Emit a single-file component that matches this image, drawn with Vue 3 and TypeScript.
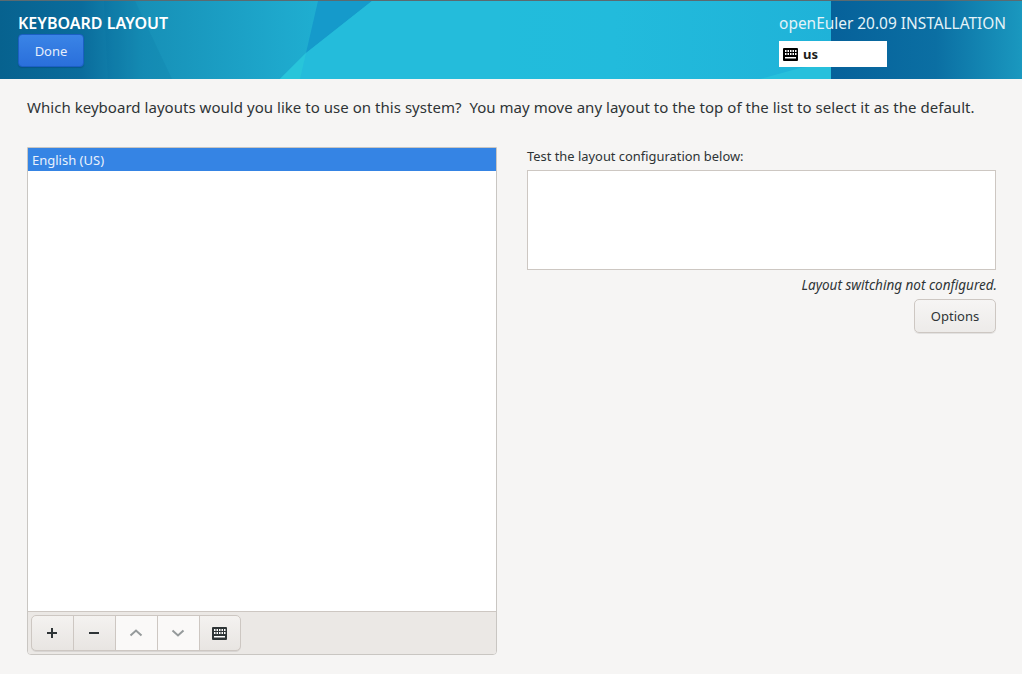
<script setup lang="ts">
const tools: { id: string; dim: boolean }[] = [
  { id: 'plus', dim: false },
  { id: 'minus', dim: false },
  { id: 'up', dim: true },
  { id: 'down', dim: true },
  { id: 'kbd', dim: false },
]
</script>

<template>
  <div class="page">
    <header class="top">
      <svg class="art" viewBox="0 0 1022 79" preserveAspectRatio="none" aria-hidden="true">
        <defs>
          <linearGradient id="base" x1="0" y1="0" x2="1" y2="0">
            <stop offset="0" stop-color="#07628f" />
            <stop offset="0.08" stop-color="#0a6c9c" />
            <stop offset="0.14" stop-color="#1790b7" />
            <stop offset="0.28" stop-color="#1ea9cd" />
            <stop offset="0.4" stop-color="#22bddb" />
            <stop offset="0.6" stop-color="#22bbdc" />
            <stop offset="0.82" stop-color="#1fb2d8" />
          </linearGradient>
          <linearGradient id="edge" x1="0" y1="0" x2="1" y2="0">
            <stop offset="0" stop-color="#06619a" />
            <stop offset="0.55" stop-color="#0b6fa3" />
            <stop offset="1" stop-color="#1a98bf" />
          </linearGradient>
        </defs>
        <rect width="1022" height="79" fill="url(#base)" />
        <polygon points="135,1 172,79 108,79 104,1" fill="#0a6c9c" opacity="0.14" />
        <polygon points="318,1 372,1 306,53" fill="#159acb" />
        <polygon points="372,1 500,1 500,79 280,79 306,53" fill="#24bcdb" />
        <polygon points="306,53 280,79 300,79" fill="#28c5da" />
        <polygon points="760,79 800,68 831,64 831,79" fill="#27c0dc" />
        <rect x="831" y="1" width="191" height="78" fill="url(#edge)" />
        <rect width="1022" height="1" fill="#5b6a70" />
      </svg>
      <div class="top-left">
        <h1 class="title">KEYBOARD LAYOUT</h1>
        <button class="done" type="button">Done</button>
      </div>
      <div class="top-right">
        <div class="product">openEuler 20.09 INSTALLATION</div>
        <div class="layout-box">
          <svg class="kbd-small" viewBox="0 0 15 13" aria-hidden="true">
            <rect width="15" height="13" rx="1" fill="#000" />
            <template v-for="y in [2, 5]" :key="y">
              <rect v-for="x in [2, 4.5, 7, 9.5, 12]" :key="x" :x="x" :y="y" width="1.5" height="2" fill="#fff" />
            </template>
            <rect x="2" y="9" width="11" height="1.5" fill="#fff" />
          </svg>
          <span class="us">us</span>
        </div>
      </div>
    </header>

    <main class="content">
      <p class="prompt">Which keyboard layouts would you like to use on this system?&nbsp; You may move any layout to the top of the list to select it as the default.</p>
      <div class="columns">
        <section class="list-panel">
          <div class="list">
            <div class="row">English (US)</div>
          </div>
          <div class="toolbar">
            <div class="tool-group">
              <button v-for="t in tools" :key="t.id" class="tool" :class="{ dim: t.dim }" type="button">
                <svg v-if="t.id === 'plus'" width="12" height="12" viewBox="0 0 12 12"><path d="M6 1v10M1 6h10" stroke="#2e3436" stroke-width="2" fill="none" /></svg>
                <svg v-else-if="t.id === 'minus'" width="12" height="12" viewBox="0 0 12 12"><path d="M1 6h10" stroke="#2e3436" stroke-width="2" fill="none" /></svg>
                <svg v-else-if="t.id === 'up'" width="14" height="10" viewBox="0 0 14 10"><path d="M1.5 7.5 7 2.5l5.5 5" stroke="#959a9b" stroke-width="2" fill="none" /></svg>
                <svg v-else-if="t.id === 'down'" width="14" height="10" viewBox="0 0 14 10"><path d="M1.5 2.5 7 7.5l5.5-5" stroke="#959a9b" stroke-width="2" fill="none" /></svg>
                <svg v-else width="15" height="13" viewBox="0 0 15 13">
                  <rect width="15" height="13" rx="1" fill="#2e3436" />
                  <template v-for="y in [2, 5]" :key="y">
                    <rect v-for="x in [2, 4.5, 7, 9.5, 12]" :key="x" :x="x" :y="y" width="1.5" height="2" fill="#fff" />
                  </template>
                  <rect x="2" y="9" width="11" height="1.5" fill="#fff" />
                </svg>
              </button>
            </div>
          </div>
        </section>

        <section class="test-panel">
          <label class="test-label">Test the layout configuration below:</label>
          <div class="test-area"></div>
          <div class="status">Layout switching not configured.</div>
          <button class="options" type="button">Options</button>
        </section>
      </div>
    </main>
  </div>
</template>

<style>
html, body { margin: 0; background: #f6f5f4; }
</style>

<style scoped>
.page {
  width: 1022px;
  height: 674px;
  background: #f6f5f4;
  font-family: "Noto Sans", sans-serif;
  color: #2e3436;
  font-size: 14px;
  overflow: hidden;
  display: flex;
  flex-direction: column;
}
.top {
  position: relative;
  height: 79px;
  flex: none;
  display: flex;
  justify-content: space-between;
  box-sizing: border-box;
}
.art { position: absolute; inset: 0; width: 100%; height: 100%; display: block; }
.top-left, .top-right { position: relative; display: flex; flex-direction: column; }
.top-left { padding: 13px 0 0 18px; align-items: flex-start; }
.top-right { padding: 13px 16px 0 0; align-items: flex-start; }
.title {
  margin: 0;
  font-size: 16px;
  line-height: 21px;
  font-weight: 600;
  color: #fff;
}
.done {
  width: 66px;
  height: 33px;
  padding: 0;
  border: 1px solid #1b5fc4;
  border-radius: 4px;
  background: linear-gradient(#3a84e6, #2a6fdb);
  box-shadow: 0 1px 1px rgba(0, 40, 90, 0.25);
  color: #e6eefb;
  font: 13px "Noto Sans", sans-serif;
}
.product { color: #e4f3f8; font-size: 15.43px; line-height: 21px; }
.layout-box {
  margin-top: 7px;
  width: 108px;
  height: 26px;
  background: #fff;
  display: flex;
  align-items: center;
  gap: 5px;
  padding-left: 4px;
  box-sizing: border-box;
}
.kbd-small { width: 15px; height: 13px; display: block; }
.us { font-size: 13px; font-weight: 700; color: #1c1c1c; }
.content { padding: 0 25px 0 27px; flex: 1; min-height: 0; display: flex; flex-direction: column; }
.prompt { margin: 18px 0 0; font-size: 15px; line-height: 20px; white-space: nowrap; letter-spacing: 0.035px; }
.columns { margin-top: 30px; display: flex; gap: 30px; align-items: flex-start; }
.list-panel {
  width: 470px;
  height: 508px;
  box-sizing: border-box;
  border: 1px solid #c9c6c2;
  border-radius: 0 0 4px 4px;
  display: flex;
  flex-direction: column;
  background: #fff;
}
.list { flex: 1; }
.row {
  height: 22px;
  padding: 1px 0 0 4px;
  line-height: 22px;
  font-size: 13px;
  background: #3584e4;
  color: #e9f1fc;
}
.toolbar {
  height: 43px;
  flex: none;
  box-sizing: border-box;
  border-top: 1px solid #cdc7c2;
  background: #ebe8e5;
  border-radius: 0 0 3px 3px;
  padding: 3px 0 0 3px;
}
.tool-group { display: flex; height: 36px; filter: drop-shadow(0 1px 0 rgba(0, 0, 0, 0.08)); }
.tool {
  width: 43px;
  flex: none;
  margin: 0 0 0 -1px;
  padding: 0 1px 0 0;
  border: 1px solid #cdc7c2;
  background: linear-gradient(#f4f2f0, #e8e5e2);
  display: flex;
  align-items: center;
  justify-content: center;
}
.tool:first-child { margin-left: 0; border-radius: 5px 0 0 5px; }
.tool:last-child { width: 42px; padding: 0 2px 0 0; border-radius: 0 5px 5px 0; }
.tool.dim { background: #faf9f8; }
.test-panel { width: 469px; display: flex; flex-direction: column; align-items: flex-end; }
.test-label { align-self: flex-start; font-size: 12.9px; line-height: 16px; margin-top: 1px; }
.test-area {
  align-self: stretch;
  height: 100px;
  box-sizing: border-box;
  margin-top: 6px;
  background: #fff;
  border: 1px solid #cdc7c2;
}
.status { font-size: 13.5px; line-height: 16px; font-style: italic; margin: 7px -1px 0 0; }
.options {
  margin-top: 6px;
  width: 82px;
  height: 34px;
  padding: 0;
  border: 1px solid #cdc7c2;
  border-radius: 5px;
  background: linear-gradient(#f6f5f4, #edebe9);
  box-shadow: 0 1px 0 rgba(0, 0, 0, 0.08);
  color: #2e3436;
  font: 13px "Noto Sans", sans-serif;
}
</style>
